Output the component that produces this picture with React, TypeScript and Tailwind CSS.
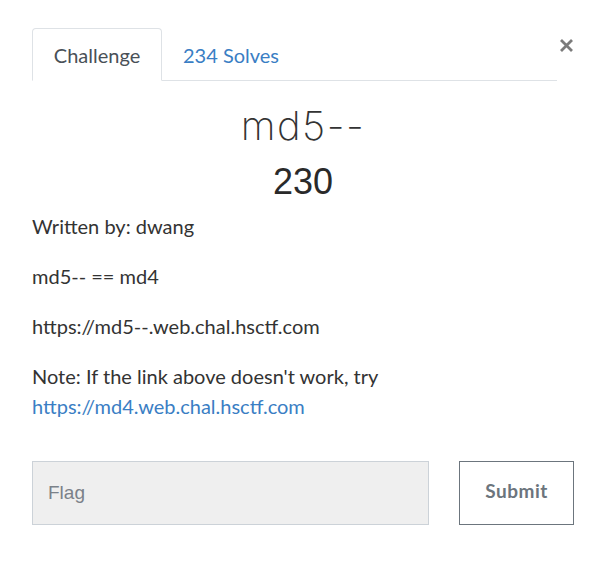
import React from "react";

export default function App() {
    return (
        <div className="w-[597px] h-[573px] bg-white text-[#212529]" style={{ fontFamily: "Lato, 'Liberation Sans', sans-serif" }}>
            <div className="pl-[32px] pr-[23px] pt-[28px]">
                <div className="flex items-start">
                    <div className="flex w-[525px] border-b border-[#dee2e6] h-[53px]">
                        <div className="w-[130px] h-[53px] -mb-px border border-[#dee2e6] border-b-white bg-white rounded-t-[4px] flex items-center justify-center text-[20px] text-[#495057]">
                            Challenge
                        </div>
                        <div className="ml-[21px] h-[53px] flex items-center text-[20px] text-[#3a7ec4]">
                            234 Solves
                        </div>
                    </div>
                    <button className="ml-[1px] mt-[4px] w-[16px] h-[26px] flex items-center justify-center text-[#7b7b7b]">
                        <svg width="15" height="15" viewBox="0 0 15 15">
                            <path d="M2 2 L13 13 M13 2 L2 13" stroke="currentColor" strokeWidth="2.8" strokeLinecap="butt" />
                        </svg>
                    </button>
                </div>
            </div>
            <div className="pl-[32px] pr-[23px]">
                <div className="w-[542px]">
                    <h2 className="text-center text-[40px] leading-[48px] mt-[21px] tracking-[1.5px] text-[#333]" style={{ fontFamily: "Inter, Lato, sans-serif", fontWeight: 200 }}>
                        md5--
                    </h2>
                    <h3 className="text-center text-[36px] leading-[44px] mt-[10px] text-[#2a2a2a]" style={{ fontFamily: "'Liberation Sans', Arial, sans-serif" }}>
                        230
                    </h3>
                    <div className="mt-[7px] text-[20px] leading-[30px] text-[#333]">
                        <p className="mb-[20px]">Written by: dwang</p>
                        <p className="mb-[20px]">md5-- == md4</p>
                        <p className="mb-[20px]">https://md5--.web.chal.hsctf.com</p>
                        <p>
                            Note: If the link above doesn't work, try
                            <br />
                            <a className="text-[#3a7ec4]">https://md4.web.chal.hsctf.com</a>
                        </p>
                    </div>
                    <div className="flex mt-[40px]">
                        <input
                            placeholder="Flag"
                            className="w-[397px] h-[64px] bg-[#efefef] border border-[#ccd2d8] px-[15px] text-[19px] placeholder:text-[#7b8189] outline-none"
                            style={{ fontFamily: "'Liberation Sans', Arial, sans-serif" }}
                        />
                        <button className="ml-[30px] w-[115px] h-[64px] pb-[3px] border border-[#6c757d] text-[#6c757d] text-[19px] font-bold tracking-[0.5px]">
                            Submit
                        </button>
                    </div>
                </div>
            </div>
        </div>
    );
}
